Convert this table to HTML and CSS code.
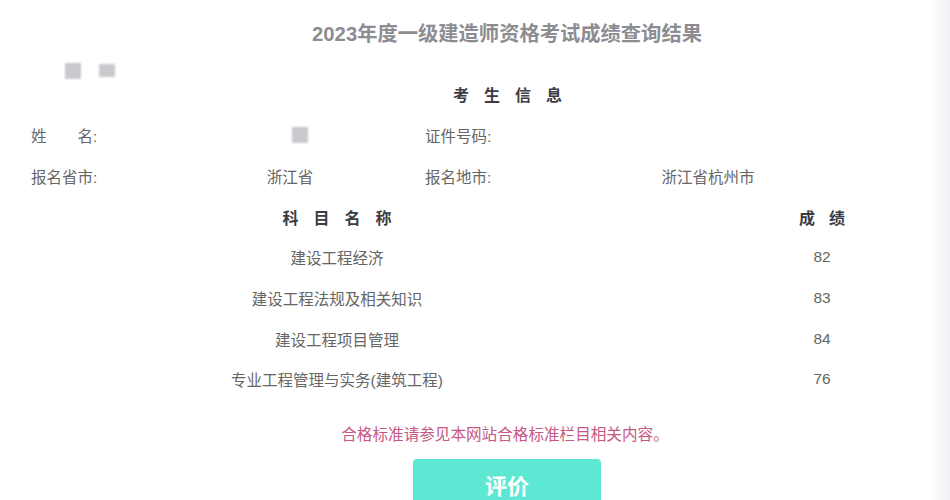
FILE: index.html
```html
<!DOCTYPE html>
<html lang="zh-CN">
<head>
<meta charset="utf-8">
<title>成绩查询结果</title>
<link rel="stylesheet" href="styles.css">
</head>
<body>
<div class="page">
  <h1 class="title">2023年度一级建造师资格考试成绩查询结果</h1>
  <div class="blur-row">
    <span class="blur-box"></span>
    <span class="blur-box b2"></span>
  </div>
  <h2 class="section">考生信息</h2>
  <div class="info">
    <div class="lbl">姓　　名:</div>
    <div class="val"><span class="blur-box small"></span></div>
    <div class="lbl lbl2">证件号码:</div>
    <div class="val"></div>
    <div class="lbl">报名省市:</div>
    <div class="val">浙江省</div>
    <div class="lbl lbl2">报名地市:</div>
    <div class="val">浙江省杭州市</div>
  </div>
  <div class="scores">
    <div class="th">科目名称</div>
    <div class="th score">成绩</div>
    <div class="td">建设工程经济</div>
    <div class="td score">82</div>
    <div class="td">建设工程法规及相关知识</div>
    <div class="td score">83</div>
    <div class="td">建设工程项目管理</div>
    <div class="td score">84</div>
    <div class="td">专业工程管理与实务(建筑工程)</div>
    <div class="td score">76</div>
  </div>
  <p class="note">合格标准请参见本网站合格标准栏目相关内容。</p>
  <div class="btn-row"><button class="btn">评价</button></div>
</div>
</body>
</html>
```

FILE: styles.css
```css
html, body {
  margin: 0;
  padding: 0;
  background: #ffffff;
}
body {
  width: 950px;
  height: 500px;
  overflow: hidden;
  font-family: "Liberation Sans", Arial, "Noto Sans CJK SC", sans-serif;
  color: #666;
}
.page {
  position: relative;
  width: 950px;
  height: 500px;
  background: linear-gradient(to right, #fff 0, #fff 930px, #f3f5fa 944px, #eef0f6 950px);
}
.title {
  margin: 0;
  padding-top: 20px;
  height: 28px;
  line-height: 28px;
  text-align: center;
  font-size: 20.3px;
  font-weight: bold;
  color: #8c8c92;
  padding-left: 64px;
}
.blur-row {
  display: flex;
  gap: 18px;
  padding: 15px 0 0 65px;
  height: 16px;
}
.blur-box {
  display: inline-block;
  width: 16px;
  height: 16px;
  background: #c9c9cd;
  filter: blur(0.8px);
}
.blur-box.b2 {
  height: 13px;
  margin-top: 1px;
}
.blur-box.small {
  width: 16px;
  height: 16px;
  vertical-align: middle;
  margin-left: 20px;
}
.section {
  margin: 0;
  padding-top: 6px;
  height: 22px;
  line-height: 22px;
  text-align: center;
  font-size: 16px;
  font-weight: bold;
  color: #3c3c44;
  letter-spacing: 15px;
  padding-left: 80px;
}
.info {
  display: grid;
  grid-template-columns: 149px 220px 160px 296px;
  grid-auto-rows: 40.6px;
  padding: 8px 0 0 31px;
  font-size: 15.5px;
  color: #666;
}
.info > div {
  display: flex;
  align-items: center;
}
.info .val {
  justify-content: center;
}
.info .lbl2 {
  padding-left: 25px;
}
.scores {
  display: grid;
  grid-template-columns: 674px 276px;
  grid-auto-rows: 40.7px;
  font-size: 15.5px;
  color: #666;
}
.scores > div {
  display: flex;
  align-items: center;
  justify-content: center;
}
.scores .score {
  padding-left: 20px;
}
.th {
  font-weight: bold;
  font-size: 16px;
  color: #3c3c44;
  letter-spacing: 15px;
  text-indent: 15px;
}
.th.score {
  letter-spacing: 14px;
  text-indent: 14px;
}
.note {
  margin: 0;
  padding-top: 24px;
  height: 22px;
  line-height: 22px;
  text-align: center;
  font-size: 15.6px;
  color: #c75883;
  padding-left: 60px;
}
.btn-row {
  padding: 13px 0 0 413px;
}
.btn {
  width: 188px;
  height: 52px;
  border: none;
  border-radius: 4px;
  background: #5de8d4;
  color: #ffffff;
  font-family: "Liberation Sans", Arial, "Noto Sans CJK SC", sans-serif;
  font-size: 22px;
  font-weight: bold;
  padding: 4px 0 0 0;
  line-height: 44px;
}
```
